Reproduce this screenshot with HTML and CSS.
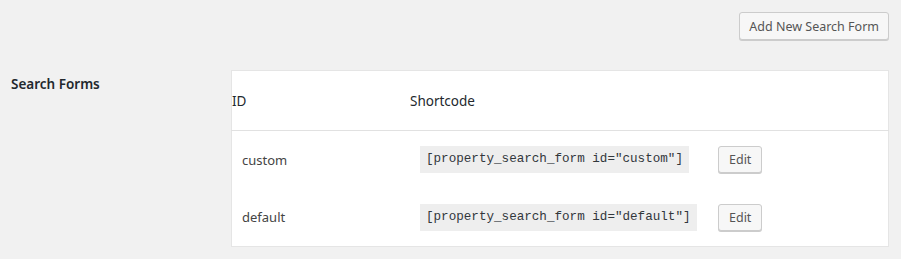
FILE: index.html
```html
<html>
<head><title>Search Forms</title>
<meta content="text/html;charset=utf-8" http-equiv="Content-Type" />
<link rel="stylesheet" href="styles.css">
</head>
<body>
<div class="toolbar">
	<button class="btn">Add New Search Form</button>
</div>
<div class="section">
	<div class="label">Search Forms</div>
	<table class="forms">
		<thead>
			<tr><th class="col-id">ID</th><th class="col-code">Shortcode</th><th></th></tr>
		</thead>
		<tbody>
			<tr>
				<td>custom</td>
				<td><code>[property_search_form id="custom"]</code></td>
				<td><button class="btn small">Edit</button></td>
			</tr>
			<tr>
				<td>default</td>
				<td><code>[property_search_form id="default"]</code></td>
				<td><button class="btn small">Edit</button></td>
			</tr>
		</tbody>
	</table>
</div>
</body>
</html>
```

FILE: styles.css
```css
body{
	margin:0;
	padding:0;
	background-color:#f1f1f1;
	color:#444;
	font-family:"Noto Sans", "Open Sans", sans-serif;
	font-size:13px;
}

.toolbar{
	display:flex;
	justify-content:flex-end;
	padding:12px 12px 0 0;
	height:30px;
}

.btn{
	font-family:inherit;
	font-size:12.5px;
	color:#555;
	background:#f7f7f7;
	border:1px solid #ccc;
	border-radius:3px;
	box-shadow:0 1px 0 #ccc;
	height:28px;
	padding:0 9px;
	cursor:pointer;
}

.btn.small{
	height:27px;
	padding:0 10px;
}

.section{
	display:flex;
	padding:28px 12px 0 11px;
}

.label{
	width:220px;
	font-size:13.5px;
	font-weight:600;
	color:#23282d;
	padding-top:5px;
}

.forms{
	flex:1;
	background:#fff;
	border:1px solid #e5e5e5;
	border-collapse:collapse;
	table-layout:fixed;
	font-family:"Noto Sans", "Open Sans", sans-serif;
	font-size:13px;
	color:#444;
}

.forms th{
	text-align:left;
	font-size:13.5px;
	font-weight:normal;
	color:#23282d;
	height:60px;
	padding:0;
	border-bottom:1px solid #e1e1e1;
}

.col-id{
	width:178px;
}

.col-code{
	width:298px;
}

.forms td{
	padding:0 10px;
	height:58px;
	vertical-align:middle;
}

code{
	display:inline-block;
	white-space:nowrap;
	background:#eeeeee;
	color:#32373c;
	font-family:"Liberation Mono", "DejaVu Sans Mono", monospace;
	font-size:12.6px;
	line-height:27px;
	padding:0 6px;
}
```
